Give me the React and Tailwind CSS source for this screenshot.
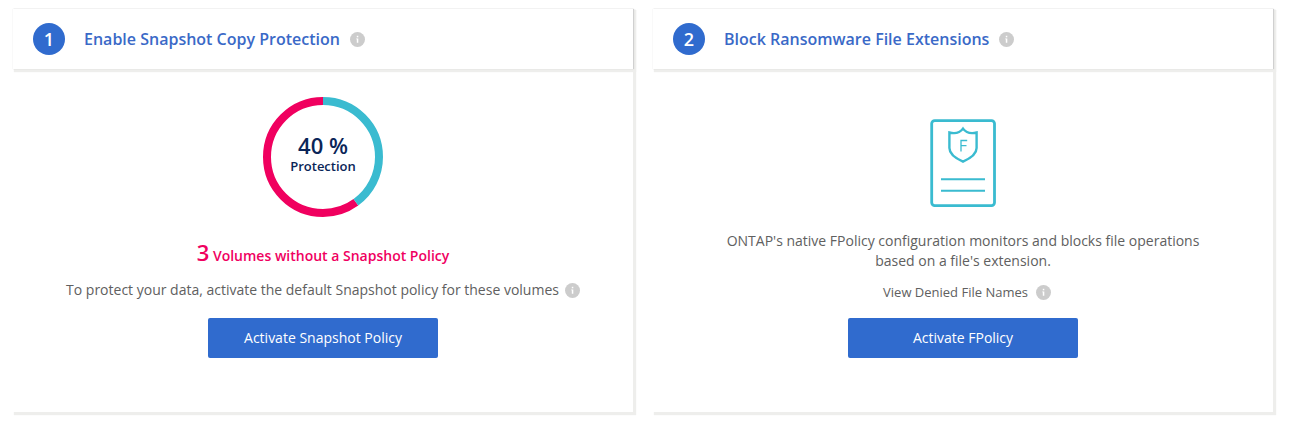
import React from "react";

function InfoButton({ label }) {
  return (
    <button type="button" aria-label={label} className="block shrink-0">
      <svg className="block size-[15px]" viewBox="0 0 15 15" aria-hidden="true">
        <circle cx="7.5" cy="7.5" r="7.5" fill="#cccccc" />
        <rect x="6.8" y="3.8" width="1.5" height="1.5" fill="#fff" />
        <path d="M6.2 6.5h2.1v4.2H6.8V7.3h-.6z" fill="#fff" />
      </svg>
    </button>
  );
}

function StepCard({ step, title, children }) {
  return (
    <section className="flex flex-col bg-white shadow-[2px_2px_1px_1px_#eeeeec]">
      <header className="flex h-[60px] items-center bg-white pl-5 shadow-[1px_0px_1px_0px_#d0d0d0,2px_2px_1px_1px_#eeeeec,0px_0px_1px_0px_#dcdcdc]">
        <span className="flex size-8 items-center justify-center rounded-full bg-[#306bce] text-lg font-semibold text-white">
          {step}
        </span>
        <h2 className="ml-[19px] mr-[10px] text-base font-semibold text-[#3a69c7]">{title}</h2>
        <InfoButton label={`About: ${title}`} />
      </header>
      <div className="flex flex-col items-center px-5 pb-[54px] text-center">{children}</div>
    </section>
  );
}

function ActionButton({ children }) {
  return (
    <button
      type="button"
      className="h-10 w-[230px] rounded-xs bg-[#306bce] text-sm text-white"
    >
      {children}
    </button>
  );
}

function ProtectionRing({ percent }) {
  return (
    <div className="grid size-[120px] place-items-center">
      <svg className="col-start-1 row-start-1 size-[120px] -rotate-90" viewBox="0 0 120 120" aria-hidden="true">
        <circle
          cx="60"
          cy="60"
          r="56"
          fill="none"
          stroke="#f0005f"
          strokeWidth="8"
          pathLength="100"
          strokeDasharray={`0 ${percent} ${100 - percent} 0`}
        />
        <circle
          cx="60"
          cy="60"
          r="56"
          fill="none"
          stroke="#3abbd0"
          strokeWidth="8"
          pathLength="100"
          strokeDasharray={`${percent} 100`}
        />
      </svg>
      <div className="col-start-1 row-start-1 pb-2 text-[#0a2558]">
        <p className="text-[22px] leading-[26px] font-semibold">{percent} %</p>
        <p className="text-[13px] leading-4 font-semibold">Protection</p>
      </div>
    </div>
  );
}

function PolicyIcon() {
  return (
    <svg className="h-[88px] w-[66px]" viewBox="0 0 66 88" fill="none" stroke="#3abbd0" aria-hidden="true">
      <rect x="1.7" y="1.6" width="62.8" height="85" rx="3" strokeWidth="2.8" />
      <path
        d="M33 9.600c-2.800 3.800-8 5.400-13.600 3.900V29c0 6 5.200 9.900 13.600 13.600 8.400-3.700 13.600-7.600 13.600-13.600V13.500C41 15 35.800 13.400 33 9.600z"
        strokeWidth="2.4"
      />
      <path d="M31 32.500V21.500H37.200M31 26.700H36.500" strokeWidth="1.300" />
      <path d="M11 60.200h44M11 71.800h44" strokeWidth="2" />
    </svg>
  );
}

export default function App() {
  return (
    <main className="grid grid-cols-2 gap-5 bg-white pt-[9px] pr-4 pb-[15px] pl-[13px] font-['Open_Sans',sans-serif]">
      <StepCard step={1} title="Enable Snapshot Copy Protection">
        <div className="flex h-[165px] items-start pt-7">
          <ProtectionRing percent={40} />
        </div>
        <p className="text-sm leading-9 font-semibold text-[#f0005f]">
          <span className="text-[22px]">3</span> Volumes without a Snapshot Policy
        </p>
        <div className="mt-[6px] mb-[18px] flex items-center gap-[6px] text-[#606060]">
          <p className="text-sm leading-5">
            To protect your data, activate the default Snapshot policy for these volumes
          </p>
          <InfoButton label="About the default Snapshot policy" />
        </div>
        <ActionButton>Activate Snapshot Policy</ActionButton>
      </StepCard>
      <StepCard step={2} title="Block Ransomware File Extensions">
        <div className="flex h-[162px] items-start pt-[50px]">
          <PolicyIcon />
        </div>
        <p className="max-w-[500px] text-sm leading-5 text-[#606060]">
          ONTAP's native FPolicy configuration monitors and blocks file operations based on a file's
          extension.
        </p>
        <div className="mt-[11px] mb-4 flex items-center gap-2 pl-2 text-[13px] leading-5 text-[#606060]">
          <a href="#denied-file-names">View Denied File Names</a>
          <InfoButton label="About denied file names" />
        </div>
        <ActionButton>Activate FPolicy</ActionButton>
      </StepCard>
    </main>
  );
}
